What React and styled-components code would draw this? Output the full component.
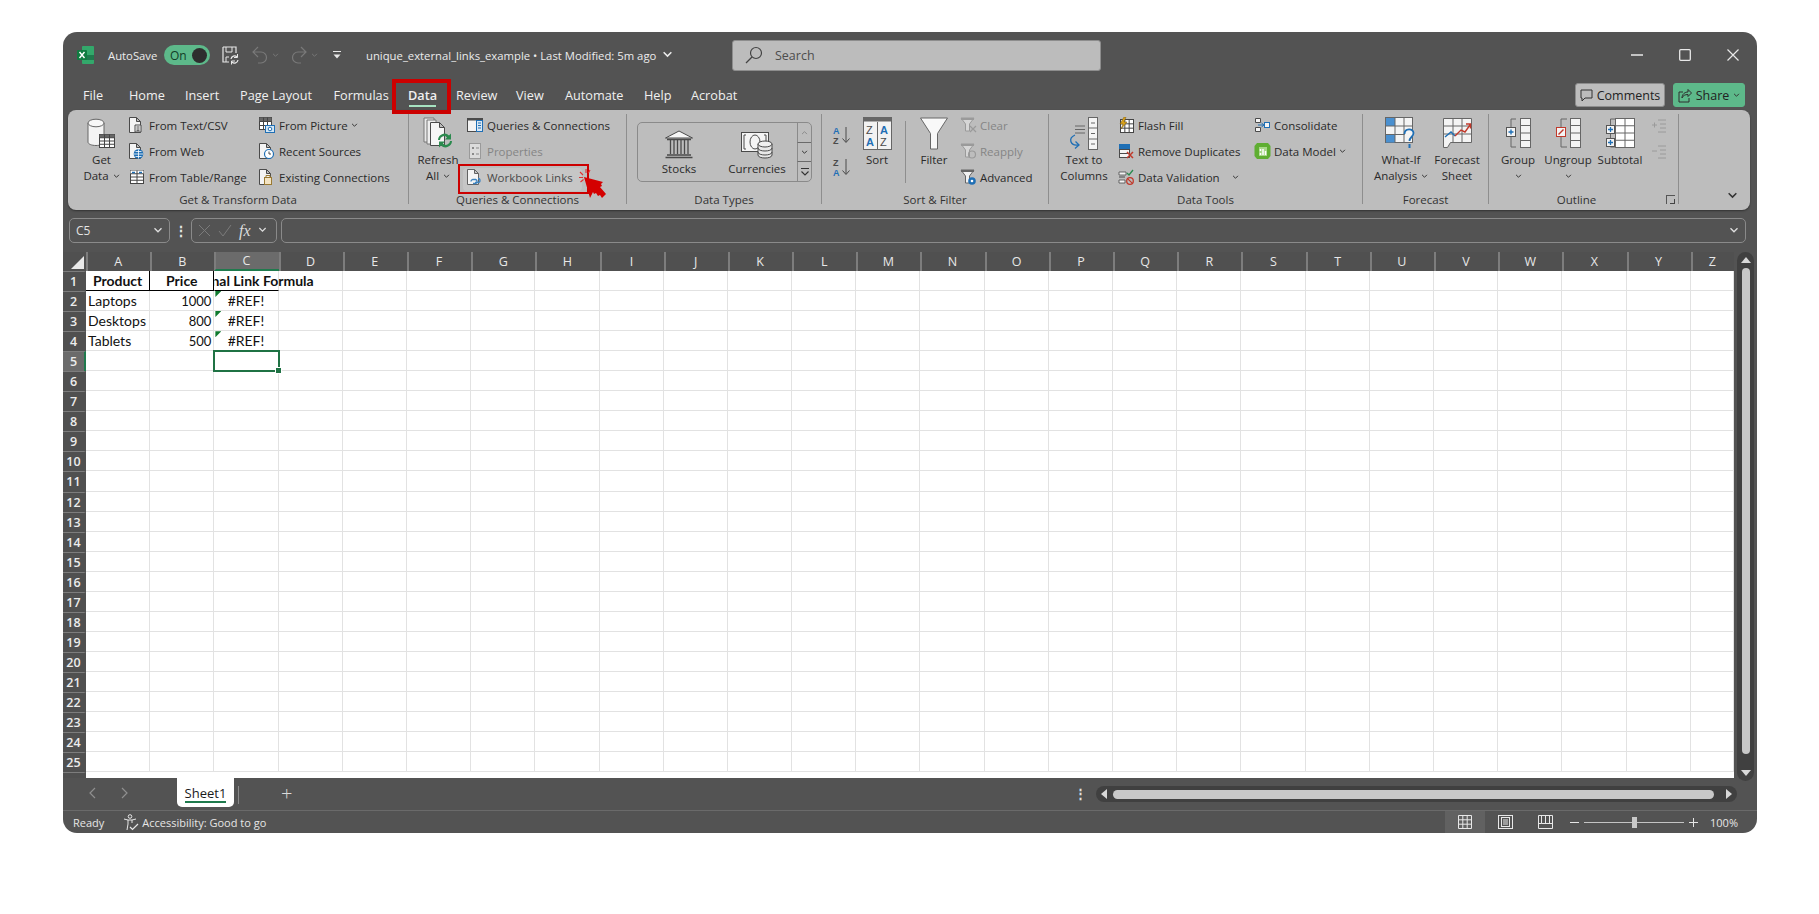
import React from "react";
import styled, { createGlobalStyle } from "styled-components";

const UI = `"Open Sans", "Noto Sans", sans-serif`;
const SHEET = `Lato, "Liberation Sans", sans-serif`;
const INK = "#4a4a4a";
const BLUE = "#1f6fb5";
const GREEN = "#2b8a4e";
const RED = "#c0392b";

const Global = createGlobalStyle`
  html, body { margin: 0; background: #fff; overflow: hidden; }
  body { font-family: ${UI}; }
  *, *::before, *::after { box-sizing: border-box; }
`;

//--- ICONS ---//

const Svg = ({ w = 16, h = 16, children }) => (
  <svg width={w} height={h} viewBox={`0 0 ${w} ${h}`} fill="none" style={{ display: "block", flex: "none" }}>
    {children}
  </svg>
);

const Doc = ({ x = 0.5, y = 0.5, w = 11, h = 15 }) => (
  <path d={`M${x} ${y}h${w - 4}l4 4v${h - 4}h-${w}z M${x + w - 4} ${y}v4h4`} fill="#f4f4f4" stroke={INK} />
);

const Chev = ({ color = "#333", size = 7, up }) => (
  <svg width={size} height={size * 0.7} viewBox="0 0 8 6" fill="none" style={{ flex: "none" }}>
    <path d={up ? "M1 5l3-3 3 3" : "M1 1l3 3 3-3"} stroke={color} strokeWidth="1.2" />
  </svg>
);

const TableLines = ({ x, y, w, h, cols = 3, rows = 3, band = "#555", stroke = "#444" }) => {
  const cw = w / cols;
  const rh = h / rows;
  return (
    <g>
      <rect x={x} y={y} width={w} height={h} fill="#fff" stroke={stroke} />
      {band && <rect x={x} y={y} width={w} height={rh} fill={band} />}
      {Array.from({ length: cols - 1 }, (_, i) => (
        <path key={i} d={`M${x + cw * (i + 1)} ${y}v${h}`} stroke={stroke} />
      ))}
      {Array.from({ length: rows - 1 }, (_, i) => (
        <path key={i} d={`M${x} ${y + rh * (i + 1)}h${w}`} stroke={stroke} />
      ))}
    </g>
  );
};

const IconGetData = () => (
  <Svg w={29} h={31}>
    <path d="M1 5v19c0 2 3.5 3.5 8 3.5s8-1.5 8-3.5V5" fill="#f4f4f4" stroke="#666" />
    <ellipse cx="9" cy="5" rx="8" ry="3.8" fill="#f8f8f8" stroke="#666" />
    <TableLines x={12.5} y={16.5} w={15} h={13} rows={4} cols={3} band="#666" />
  </Svg>
);
const IconTextCsv = () => (
  <Svg><Doc /><path d="M6 8h6v7H6z" fill="#f4f4f4" stroke={INK} /><path d="M7.5 10h3M7.5 12h3M7.5 13.7h3" stroke={INK} /></Svg>
);
const IconWeb = () => (
  <Svg><Doc /><circle cx="9.5" cy="11" r="4.8" fill={BLUE} /><path d="M5 11h9M9.5 6.5v9M6.500 8.500h6M6.500 13.500h6" stroke="#fff" strokeWidth=".8" /></Svg>
);
const IconTableRange = () => (
  <Svg>
    <TableLines x={1.5} y={1.5} w={13} h={13} cols={2} rows={4} band="#fff" />
    <path d="M3 3.5h3M10 3.5h3" stroke={BLUE} strokeWidth="1.6" />
  </Svg>
);
const IconPicture = () => (
  <Svg w={16} h={16}>
    <TableLines x={0.5} y={0.5} w={12} h={12} cols={3} rows={3} band="#666" />
    <rect x="6.5" y="8.5" width="9" height="7" fill="#d5e6f3" stroke={BLUE} />
    <circle cx="11" cy="12" r="1.800" fill="#fff" stroke={BLUE} />
  </Svg>
);
const IconRecent = () => (
  <Svg><Doc /><circle cx="10" cy="11" r="4.5" fill="#fff" stroke={BLUE} strokeWidth="1.2" /><path d="M10 8.500V11h2" stroke={INK} /></Svg>
);
const IconExisting = () => (
  <Svg>
    <Doc />
    <rect x="5.5" y="8.5" width="7" height="7" fill="#f3e4c4" stroke="#9a7a33" />
    <path d="M7 8.500V6.500h4v2" stroke="#9a7a33" />
  </Svg>
);
const IconRefresh = () => (
  <Svg w={31} h={33}>
    <path d="M1 1h10v24H1z" fill="#e8e8e8" stroke="#777" />
    <path d="M4 3h9v24H4z" fill="#eee" stroke="#777" />
    <path d="M7.5 5.5h9l5 5v18h-14z M16.5 5.5v5h5" fill="#f6f6f6" stroke={INK} />
    <path d="M15 23a6.5 6.5 0 0 1 11-4.5l2-2v6h-6l2-2a4 4 0 0 0-7 2.500z" fill={GREEN} />
    <path d="M29 24a6.500 6.500 0 0 1-11 4.500l-2 2v-6h6l-2 2a4 4 0 0 0 7-2.500z" fill={GREEN} />
  </Svg>
);
const IconQueries = () => (
  <Svg>
    <rect x=".5" y="1.500" width="15" height="13" fill="#f4f4f4" stroke={INK} />
    <rect x=".5" y="1.500" width="15" height="2" fill={INK} />
    <rect x="9.500" y="3.500" width="6" height="11" fill="#dbe8f4" stroke={BLUE} />
    <path d="M11 6h3M11 8.500h3M11 11h3" stroke={BLUE} />
  </Svg>
);
const IconProperties = () => (
  <Svg>
    <rect x="2.500" y=".5" width="11" height="15" fill="#dcdcdc" stroke="#9a9a9a" />
    <path d="M5 4h2v2H5zM5 10h2v2H5z" fill="#8a8a8a" /><path d="M9 5h3M9 11h3" stroke="#8a8a8a" />
  </Svg>
);
const IconWorkbookLinks = () => (
  <Svg>
    <Doc />
    <path d="M4 12.500a2 2 0 0 1 2-2h3M8 10.500a2 2 0 0 1 0 4H6M11 9.500a2 2 0 0 1 0 4H8" stroke={BLUE} strokeWidth="1.300" />
  </Svg>
);
const IconStocks = () => (
  <Svg w={30} h={29}>
    <path d="M15 1L1.500 8h27z" fill="#f6f6f6" stroke={INK} />
    <path d="M3 9.500h24M3 25h24M1.500 27.500h27" stroke={INK} strokeWidth="1.400" />
    <path d="M6.500 10v14M10 10v14M13.500 10v14M17 10v14M20.500 10v14M24 10v14" stroke={INK} strokeWidth="1.300" />
  </Svg>
);
const IconCurrencies = () => (
  <Svg w={32} h={30}>
    <rect x=".5" y="3.500" width="27" height="19" fill="#f4f4f4" stroke={INK} />
    <path d="M5 6H3v14h2M23 6h2v14h-2" stroke={INK} />
    <ellipse cx="14" cy="13" rx="5" ry="7" fill="#f4f4f4" stroke={INK} />
    <path d="M17 15v11c0 4 14 4 14 0V15" fill="#e8e8e8" stroke={INK} />
    <ellipse cx="24" cy="15" rx="7" ry="3" fill="#f0f0f0" stroke={INK} />
    <path d="M17 19c0 4 14 4 14 0M17 23c0 4 14 4 14 0" stroke={INK} />
  </Svg>
);
const SortAZ = ({ top, bottom, topColor, bottomColor }) => (
  <Svg w={20} h={21}>
    <text x="1" y="8.500" fontSize="9" fontWeight="700" fontFamily="Liberation Sans" fill={topColor}>{top}</text>
    <text x="1" y="18.500" fontSize="9" fontWeight="700" fontFamily="Liberation Sans" fill={bottomColor}>{bottom}</text>
    <path d="M14 2v15M10.500 13.500L14 17.500l3.500-4" stroke={INK} />
  </Svg>
);
const IconSort = () => (
  <Svg w={29} h={33}>
    <rect x=".5" y=".5" width="28" height="32" fill="#f2f2f2" stroke="#666" />
    <rect x=".5" y=".5" width="28" height="4" fill="#666" />
    <path d="M14.500 5v28" stroke="#666" />
    <text x="3" y="17" fontSize="11" fontFamily="Liberation Sans" fill={INK}>Z</text>
    <text x="3" y="29" fontSize="11" fontWeight="700" fontFamily="Liberation Sans" fill={BLUE}>A</text>
    <text x="17" y="17" fontSize="11" fontWeight="700" fontFamily="Liberation Sans" fill={BLUE}>A</text>
    <text x="17" y="29" fontSize="11" fontFamily="Liberation Sans" fill={INK}>Z</text>
  </Svg>
);
const IconFilter = () => (
  <Svg w={28} h={33}>
    <path d="M.5 1h27L17.500 16.500V32h-7V16.500z" fill="#f8f8f8" stroke="#666" />
  </Svg>
);
const SmallFunnel = ({ dim, children }) => (
  <Svg w={18} h={18}>
    <path d="M1 2h13L9.500 8v7h-4V8z" fill={dim ? "#d6d6d6" : "#f2f2f2"} stroke={dim ? "#9a9a9a" : "#666"} />
    <path d="M1 2h13v2H1z" fill={dim ? "#9a9a9a" : "#666"} />
    {children}
  </Svg>
);
const IconClear = () => (
  <SmallFunnel dim><path d="M10 10l6 6M16 10l-6 6" stroke="#9a9a9a" strokeWidth="1.200" /></SmallFunnel>
);
const IconReapply = () => (
  <SmallFunnel dim><circle cx="12" cy="12.500" r="3.500" stroke="#9a9a9a" strokeWidth="1.200" /></SmallFunnel>
);
const IconAdvanced = () => (
  <SmallFunnel><circle cx="12" cy="13" r="3.800" fill={BLUE} /><circle cx="12" cy="13" r="1.300" fill="#fff" /></SmallFunnel>
);
const IconTextColumns = () => (
  <Svg w={32} h={33}>
    <path d="M7 9h10M7 12.500h10M7 16h10" stroke="#666" />
    <rect x="20.500" y=".5" width="9" height="32" fill="#f4f4f4" stroke="#666" />
    <path d="M20.500 11h9M20.500 22h9M23 6h4M23 16.500h4M23 27h4" stroke="#666" />
    <path d="M7 18c-7 3-5 11 3 10" stroke={BLUE} strokeWidth="1.300" />
    <path d="M7.500 24.500L11 28l-4 3.500" stroke={BLUE} strokeWidth="1.300" />
  </Svg>
);
const IconFlash = () => (
  <Svg>
    <TableLines x={2.500} y={2.500} w={13} h={13} cols={3} rows={3} band="" />
    <path d="M6 0L2 7h3L3 12l6-7H6l2-5z" fill="#d9a21b" stroke="#7a5a10" strokeWidth=".5" />
  </Svg>
);
const IconDuplicates = () => (
  <Svg>
    <rect x="1" y="1" width="11" height="5" fill={BLUE} />
    <rect x="1.500" y="6.500" width="10" height="8" fill="#f4f4f4" stroke={INK} />
    <path d="M1.500 10.500h10" stroke={INK} />
    <path d="M9 9l6 6M15 9l-6 6" stroke={RED} strokeWidth="1.500" />
  </Svg>
);
const IconValidation = () => (
  <Svg>
    <path d="M1 3h7v3H1zM1 11h6v3H1z" fill="#f4f4f4" stroke={INK} strokeWidth=".8" />
    <path d="M9 4l2 2 4-5" stroke={GREEN} strokeWidth="1.300" />
    <path d="M1 8h6" stroke={INK} />
    <circle cx="12" cy="12" r="3.300" stroke={RED} strokeWidth="1.300" /><path d="M9.800 9.800l4.400 4.400" stroke={RED} strokeWidth="1.200" />
  </Svg>
);
const IconConsolidate = () => (
  <Svg>
    <path d="M1.500 1.500h5v4h-5zM1.500 10.500h5v4h-5z" fill="#f4f4f4" stroke={INK} />
    <path d="M4 8h5M7.500 6L10 8 7.500 10" stroke={BLUE} />
    <rect x="10.500" y="5.500" width="5" height="5" fill="#f4f4f4" stroke={BLUE} />
  </Svg>
);
const IconDataModel = () => (
  <Svg w={17} h={18}>
    <path d="M3 1h11l2.500 3v10L14 17H3L.5 14V4z" fill="#5fae32" />
    <path d="M5 5h8v9H5z" fill="#a9d88a" />
    <path d="M6.500 7v2M6.500 11v2M9 7v6M11.500 9v4" stroke="#fff" strokeWidth="1.500" />
  </Svg>
);
const IconWhatIf = () => (
  <Svg w={32} h={33}>
    <rect x=".5" y=".5" width="27" height="25" fill="#f4f4f4" stroke="#666" />
    <rect x="1" y="1" width="9" height="8" fill="#4a90d0" />
    <rect x="1" y="9" width="9" height="8" fill="#f4f4f4" />
    <rect x="1" y="17.500" width="9" height="8" fill="#4a90d0" />
    <path d="M10 1v25M19 1v25M1 9h27M1 17.500h27" stroke="#666" />
    <path d="M19.500 17c0-6 9-6 9-1 0 4-4 4-4 8" fill="#f4f4f4" stroke={BLUE} strokeWidth="1.800" />
    <path d="M24.500 27v4" stroke={BLUE} strokeWidth="2" />
  </Svg>
);
const IconForecast = () => (
  <Svg w={29} h={31}>
    <path d="M.5.5h28v24h-21l-3 5H.5z" fill="#f4f4f4" stroke="#666" />
    <path d="M.5 8h28M.5 16h28M10 .5v24M19 .5v24" stroke="#666" />
    <path d="M2 19l6-5 4 4" stroke={BLUE} strokeWidth="1.400" />
    <path d="M12 18l6-6 4 2 5-7M23 6h4.500v4.500" stroke={RED} strokeWidth="1.400" />
  </Svg>
);
const OutlineRows = ({ x, w = 10 }) => (
  <g>
    <rect x={x + 0.5} y=".5" width={w} height="29" fill="#f4f4f4" stroke="#666" />
    <path d={`M${x} 7.500h${w}M${x} 15h${w}M${x} 22.500h${w}`} stroke="#666" />
  </g>
);
const IconGroup = () => (
  <Svg w={25} h={30}>
    <OutlineRows x={14} />
    <path d="M10 1H5v28h5" stroke="#666" />
    <rect x=".5" y="9.500" width="9" height="9" fill="#f4f4f4" stroke="#555" />
    <path d="M5 11.500v5M2.500 14h5" stroke={BLUE} strokeWidth="1.400" />
  </Svg>
);
const IconUngroup = () => (
  <Svg w={25} h={30}>
    <OutlineRows x={14} />
    <path d="M11 1H5v28h6" stroke="#666" />
    <rect x=".5" y="9.500" width="9" height="9" fill="#f4f4f4" stroke={RED} />
    <path d="M2.500 16.500L7.500 11.500" stroke={RED} strokeWidth="1.400" />
  </Svg>
);
const IconSubtotal = () => (
  <Svg w={29} h={30}>
    <TableLines x={9.500} y={.5} w={19} h={29} cols={2} rows={4} band="" stroke="#666" />
    <path d="M9 1H4.500v28H9" stroke="#666" />
    <rect x=".5" y="7.500" width="8" height="8" fill="#f4f4f4" stroke="#555" />
    <rect x=".5" y="20.500" width="8" height="8" fill="#f4f4f4" stroke="#555" />
    <path d="M4.500 9v5M2 11.500h5M4.500 22v5M2 24.500h5" stroke={BLUE} strokeWidth="1.300" />
  </Svg>
);
const IconOutlineLevel = ({ sign }) => (
  <Svg w={16} h={15}>
    <path d="M7 2h8M9 6h6M9 10h6M7 14h8" stroke="#9a9a9a" />
    <path d={sign === "+" ? "M1 7h5M3.500 4.500v5" : "M1 7h5"} stroke="#9a9a9a" />
  </Svg>
);
const IconExcel = () => (
  <Svg w={17} h={18}>
    <rect x="5" y="0" width="12" height="18" rx="1" fill="#33a86b" />
    <rect x="5" y="9" width="12" height="5" fill="#1f7a4d" />
    <rect x="0" y="4" width="10" height="10" rx="1" fill="#107c41" />
    <path d="M2.500 6l5 6M7.500 6l-5 6" stroke="#fff" strokeWidth="1.400" />
  </Svg>
);
const IconSave = () => (
  <Svg w={17} h={19}>
    <path d="M1 1h13v6M1 1v15h6" stroke="#e8e8e8" strokeWidth="1.200" />
    <path d="M4 1v5h6V1M4 16v-5h3" stroke="#e8e8e8" />
    <path d="M9 13a3.500 3.500 0 0 1 6-2M16 14a3.500 3.500 0 0 1-6 2" stroke="#e8e8e8" strokeWidth="1.200" />
    <path d="M15.500 8v3.500H12M9.500 18.500V15H13" stroke="#e8e8e8" />
  </Svg>
);
const IconUndo = () => (
  <Svg w={16} h={18}>
    <path d="M6 1L1 6l5 5M1 6h8a5.500 5.500 0 0 1 0 11H6" stroke="#797979" strokeWidth="1.200" />
  </Svg>
);
const IconRedo = () => (
  <Svg w={16} h={18}>
    <path d="M10 1l5 5-5 5M15 6H7a5.500 5.500 0 0 0 0 11h3" stroke="#797979" strokeWidth="1.200" />
  </Svg>
);
const IconCustomize = () => (
  <Svg w={10} h={10}>
    <path d="M1 1.500h8" stroke="#e8e8e8" /><path d="M1.500 4.500h7L5 8.500z" fill="#e8e8e8" />
  </Svg>
);
const IconMoreDark = () => (
  <Svg w={10} h={10}>
    <path d="M1 1.500h8" stroke="#333" /><path d="M1.500 4.500L5 8l3.500-3.500" stroke="#333" strokeWidth="1.100" />
  </Svg>
);
const IconSearch = () => (
  <Svg w={18} h={18}>
    <circle cx="11" cy="7" r="5.500" stroke="#444" strokeWidth="1.200" />
    <path d="M7 11l-6 6" stroke="#444" strokeWidth="1.300" />
  </Svg>
);
const IconComment = () => (
  <Svg w={13} h={13}>
    <path d="M1 1h11v8H5l-3 3V9H1z" stroke="#333" />
  </Svg>
);
const IconShare = () => (
  <Svg w={14} h={15}>
    <path d="M5 4H1v10h10v-4" stroke="#2f2f2f" />
    <path d="M4 10c0-4 3-6 6-6V1.500L13.500 5 10 8.500V6.500c-3 0-5 1-6 3.500z" stroke="#2f2f2f" />
  </Svg>
);
const IconAccessibility = () => (
  <Svg w={16} h={17}>
    <circle cx="7" cy="2.500" r="1.800" stroke="#e6e6e6" />
    <path d="M1 5l4 1h4l4-1M5 6v4l-1 6M9 6v3" stroke="#e6e6e6" />
    <path d="M7 13l2.500 2.500L15 10" stroke="#e6e6e6" strokeWidth="1.200" />
  </Svg>
);
const IconNormalView = () => (
  <Svg w={14} h={14}>
    <path d="M.5.5h13v13H.5zM4.800.5v13M9.200.5v13M.5 4.800h13M.5 9.200h13" stroke="#e8e8e8" />
  </Svg>
);
const IconPageView = () => (
  <Svg w={15} h={14}>
    <rect x=".5" y=".5" width="14" height="13" stroke="#e8e8e8" />
    <rect x="3.500" y="2.500" width="8" height="9" stroke="#e8e8e8" />
    <path d="M5 5h5M5 7h5M5 9h5" stroke="#e8e8e8" />
  </Svg>
);
const IconBreakView = () => (
  <Svg w={15} h={14}>
    <path d="M.5.5h14v13H.5zM.5 8.500h3v-8M7.500 8.500v-8M11.500 8.500v-8M3.500 8.500h11" stroke="#e8e8e8" />
  </Svg>
);
const RedCursor = () => (
  <Svg w={25} h={26}>
    <path d="M1 1l6 21 3-6 1 2 2-1 2 3 2-1 2 3 4-4-6-7 2-1-1-2 2-2z" fill="#d40000" />
  </Svg>
);
const Sparks = () => (
  <Svg w={14} h={14}>
    <path d="M7 0v4M1 3l3 3M0 8.500h4M1.500 13l3-2.500M11 1l-1.500 3" stroke="#e03030" strokeWidth="1.100" />
  </Svg>
);

//--- LAYOUT ---//

const Win = styled.div`
  width: 1694px;
  height: 801px;
  margin: 32px 0 0 63px;
  background: #535353;
  border-radius: 14px;
  overflow: hidden;
  display: flex;
  flex-direction: column;
`;

const TitleBar = styled.div`
  height: 46px;
  flex: none;
  display: flex;
  align-items: center;
  color: #ececec;
  font-size: 11.3px;
  white-space: nowrap;
`;

const TitleItem = styled.div`
  display: flex;
  align-items: center;
  flex: none;
  width: ${({ $w }) => $w}px;
  margin-left: ${({ $ml }) => $ml || 0}px;
  gap: ${({ $gap }) => $gap || 0}px;
`;

const Toggle = styled.div`
  width: 46px;
  height: 20px;
  border-radius: 10px;
  background: #5db98a;
  display: flex;
  align-items: center;
  justify-content: space-between;
  padding: 0 3px 0 6px;
  color: #123d28;
  font-size: 12px;
  flex: none;
  &::after {
    content: "";
    width: 15px;
    height: 15px;
    border-radius: 50%;
    background: #2e2e2e;
  }
`;

const SearchBox = styled.div`
  width: 369px;
  height: 31px;
  margin-left: 46px;
  flex: none;
  background: #bcbcbc;
  border: 1px solid #8d8d8d;
  border-radius: 3px;
  display: flex;
  align-items: center;
  gap: 12px;
  padding-left: 12px;
  color: #4d4d4d;
  font-size: 12.5px;
`;

const WinButtons = styled.div`
  margin-left: auto;
  width: 126px;
  display: flex;
  justify-content: space-between;
  align-items: center;
  padding-right: 18px;
  flex: none;
`;

const TabsRow = styled.div`
  height: 32px;
  flex: none;
  display: flex;
  align-items: center;
  padding: 2px 0 0 20px;
  position: relative;
  color: #f0f0f0;
  font-size: 12.7px;
`;

const Tab = styled.div`
  width: ${({ $w }) => $w}px;
  flex: none;
  position: relative;
  ${({ $active }) =>
    $active &&
    `
    font-weight: 600;
    &::before {
      content: "";
      position: absolute;
      left: -16px;
      top: -7px;
      width: 59px;
      height: 35px;
      border: 4px solid #cc0000;
      pointer-events: none;
    }
    &::after {
      content: "";
      position: absolute;
      left: 1px;
      top: 19px;
      width: 27px;
      height: 2px;
      background: #a6e3c1;
    }
  `}
`;

const TabActions = styled.div`
  margin-left: auto;
  margin-right: 12px;
  display: flex;
  gap: 8px;
`;

const PillButton = styled.div`
  height: 24px;
  display: flex;
  align-items: center;
  justify-content: center;
  gap: 4px;
  width: ${({ $w }) => $w}px;
  background: ${({ $bg }) => $bg};
  border: 1px solid ${({ $border }) => $border};
  border-radius: 3px;
  color: #222;
  font-size: 12.5px;
`;

const Ribbon = styled.div`
  height: 100px;
  flex: none;
  margin: 0 7px 0 5px;
  background: #bdbdbd;
  border-radius: 8px;
  box-shadow: 0 1px 2px rgba(0, 0, 0, 0.4);
  display: flex;
  color: #2a2a2a;
  font-size: 11.5px;
`;

const Group = styled.div`
  width: ${({ $w }) => $w}px;
  flex: none;
  height: 90px;
  margin-top: 4px;
  border-right: 1px solid #8e8e8e;
  display: flex;
  flex-direction: column;
`;

const GroupBody = styled.div`
  height: 78px;
  flex: none;
  display: flex;
  align-items: flex-start;
  padding-left: ${({ $pl }) => $pl || 0}px;
`;

const GroupLabel = styled.div`
  height: 12px;
  line-height: 16px;
  text-align: center;
  color: #333;
  padding-right: ${({ $pr }) => $pr || 0}px;
  position: relative;
`;

const Launcher = styled.div`
  position: absolute;
  right: 3px;
  top: 3px;
  width: 9px;
  height: 9px;
  border: 1px solid #555;
  border-right: 0;
  border-bottom: 0;
  &::after {
    content: "";
    position: absolute;
    right: 0;
    bottom: 0;
    width: 5px;
    height: 5px;
    border-right: 1px solid #444;
    border-bottom: 1px solid #444;
  }
`;

const LargeButton = styled.div`
  width: ${({ $w }) => $w}px;
  margin-left: ${({ $ml }) => $ml || 0}px;
  flex: none;
  display: flex;
  flex-direction: column;
  align-items: center;
  line-height: 16px;
  white-space: nowrap;
`;

const IconSlot = styled.div`
  height: 38px;
  display: flex;
  align-items: center;
  justify-content: center;
`;

const LabelLine = styled.div`
  display: flex;
  align-items: center;
  justify-content: center;
  gap: 4px;
  height: 16px;
`;

const SmallColumn = styled.div`
  width: ${({ $w }) => $w || 120}px;
  margin: -2px 0 0 ${({ $ml }) => $ml || 0}px;
  flex: none;
  display: flex;
  flex-direction: column;
  position: relative;
`;

const SmallButton = styled.div`
  height: 26px;
  display: flex;
  align-items: center;
  white-space: nowrap;
  color: ${({ $dim }) => ($dim ? "#858585" : "inherit")};
`;

const SmallIcon = styled.div`
  width: 18px;
  flex: none;
  display: flex;
  justify-content: flex-start;
  margin-left: -2px;
  margin-right: 2px;
`;

const Callout = styled.div`
  position: absolute;
  left: -11px;
  top: 52px;
  width: 131px;
  height: 30px;
  border: 2.5px solid #cc0000;
  pointer-events: none;
  &::before {
    content: "";
    position: absolute;
    left: 3px;
    top: 2px;
    right: 5px;
    bottom: 1px;
    border-radius: 4px;
    background: rgba(255, 255, 255, 0.14);
  }
`;

const CalloutSpark = styled.div`
  position: absolute;
  left: 110px;
  top: 57px;
`;

const CalloutCursor = styled.div`
  position: absolute;
  left: 114px;
  top: 64px;
`;

const Gallery = styled.div`
  width: 175px;
  height: 60px;
  margin: 8px 0 0 10px;
  border: 1px solid #8a8a8a;
  border-radius: 5px;
  display: flex;
`;

const GalleryItem = styled.div`
  width: ${({ $w }) => $w}px;
  flex: none;
  display: flex;
  flex-direction: column;
  align-items: center;
  padding-top: 7px;
  line-height: 16px;
`;

const GallerySlot = styled.div`
  height: 28px;
  margin-bottom: 3px;
  display: flex;
  align-items: center;
`;

const GalleryScroll = styled.div`
  width: 14px;
  margin-left: auto;
  display: flex;
  flex-direction: column;
`;

const ScrollStep = styled.div`
  flex: 1;
  display: flex;
  align-items: center;
  justify-content: center;
  border-left: 1px solid #8a8a8a;
  border-top: ${({ $line }) => ($line ? "1px solid #6a6a6a" : "none")};
`;

const SortColumn = styled.div`
  width: 25px;
  flex: none;
  display: flex;
  flex-direction: column;
  gap: 11px;
  padding-top: 11px;
`;

const VDivider = styled.div`
  width: 1px;
  height: 62px;
  flex: none;
  margin: 7px 0 0 8px;
  background: #8e8e8e;
`;

const RibbonEnd = styled.div`
  flex: 1;
  display: flex;
  align-items: flex-end;
  justify-content: flex-end;
  padding: 0 12px 10px 0;
`;

//--- FORMULA BAR ---//

const FormulaBar = styled.div`
  height: 25px;
  flex: none;
  margin-top: 8px;
  padding-left: 6px;
  display: flex;
  align-items: center;
  color: #e4e4e4;
`;

const BarBox = styled.div`
  width: ${({ $w }) => ($w ? `${$w}px` : "auto")};
  flex: ${({ $w }) => ($w ? "none" : "1")};
  height: 25px;
  border: 1px solid #8a8a8a;
  border-radius: 5px;
  display: flex;
  align-items: center;
  justify-content: ${({ $between }) => ($between ? "space-between" : "flex-start")};
  padding: 0 6px;
  font-size: 12px;
  gap: ${({ $gap }) => $gap || 0}px;
  margin-right: ${({ $mr }) => $mr || 0}px;
`;

const BarDots = styled.div`
  width: 21px;
  flex: none;
  text-align: center;
  font-size: 14px;
  font-weight: 700;
`;

const Fx = styled.span`
  font-family: "Liberation Serif", serif;
  font-style: italic;
  font-size: 16px;
  color: #dcdcdc;
`;

//--- SHEET ---//

const SheetArea = styled.div`
  height: 526px;
  flex: none;
  margin-top: 9px;
  display: flex;
`;

const GridWrap = styled.div`
  width: 1671px;
  flex: none;
  overflow: hidden;
  display: grid;
  grid-template-columns: 23px repeat(25, 64.19px) 1fr;
  grid-template-rows: 19px repeat(25, 20.05px) 1fr;
  background: #fff;
  font-family: ${SHEET};
  font-size: 14px;
  color: #111;
`;

const Corner = styled.div`
  background: #505050;
  position: relative;
  &::after {
    content: "";
    position: absolute;
    right: 2px;
    bottom: 2px;
    width: 13px;
    height: 13px;
    background: #e8e8e8;
    clip-path: polygon(100% 0, 100% 100%, 0 100%);
  }
`;

const ColHead = styled.div`
  background: ${({ $active }) => ($active ? "#6b6b6b" : "#505050")};
  border-left: 2px solid #7d7d7d;
  border-bottom: ${({ $active }) => ($active ? "2px solid #1f7a4d" : "none")};
  padding-right: 2px;
  color: #e8e8e8;
  font-family: ${UI};
  font-size: 12.5px;
  display: flex;
  align-items: center;
  justify-content: center;
`;

const RowHead = styled.div`
  background: ${({ $active }) => ($active ? "#6b6b6b" : "#505050")};
  border-top: 1px solid #7d7d7d;
  border-right: 2px solid ${({ $active }) => ($active ? "#1f7a4d" : "#505050")};
  color: #ececec;
  font-family: ${UI};
  font-size: 12.5px;
  font-weight: 600;
  display: flex;
  align-items: center;
  justify-content: center;
`;

const Cell = styled.div`
  position: relative;
  border-right: 1px solid ${({ $ruledR }) => ($ruledR ? "#000" : "#e2e2e2")};
  border-bottom: 1px solid ${({ $ruledB }) => ($ruledB ? "#000" : "#e2e2e2")};
  display: flex;
  align-items: center;
  padding: 0 2px;
  white-space: nowrap;
  font-size: ${({ $num }) => ($num ? "13px" : "inherit")};
  font-weight: ${({ $bold }) => ($bold ? 700 : 400)};
  justify-content: ${({ $align }) => $align || "flex-start"};
  ${({ $spill }) => $spill && "clip-path: inset(0 -200px 0 0); z-index: 1;"}
  ${({ $flag }) =>
    $flag &&
    `
    &::before {
      content: "";
      position: absolute;
      left: 1px;
      top: 0;
      width: 6px;
      height: 6px;
      background: #0e7a2e;
      clip-path: polygon(0 0, 100% 0, 0 100%);
    }
  `}
  ${({ $selected }) =>
    $selected &&
    `
    outline: 2px solid #1f7244;
    outline-offset: -1px;
    z-index: 2;
    &::after {
      content: "";
      position: absolute;
      right: -4px;
      bottom: -4px;
      width: 7px;
      height: 7px;
      background: #1f7244;
      border: 1px solid #fff;
    }
  `}
`;

const VScroll = styled.div`
  width: 23px;
  flex: none;
  padding: 0 3px;
  margin-bottom: -3px;
`;

const VTrack = styled.div`
  height: 100%;
  background: #404040;
  border-radius: 9px;
  display: flex;
  flex-direction: column;
  align-items: center;
  padding: 5px 0;
  gap: 5px;
`;

const VThumb = styled.div`
  flex: 1;
  width: 8px;
  border-radius: 4px;
  background: #c8c8c8;
  margin-bottom: 11px;
`;

const Tri = styled.div`
  width: 0;
  height: 0;
  flex: none;
  ${({ $dir }) => {
    if ($dir === "up") return "border: 5px solid transparent; border-bottom: 6px solid #d8d8d8; border-top: 0;";
    if ($dir === "down") return "border: 5px solid transparent; border-top: 6px solid #d8d8d8; border-bottom: 0;";
    if ($dir === "left") return "border: 5px solid transparent; border-right: 6px solid #d8d8d8; border-left: 0;";
    return "border: 5px solid transparent; border-left: 6px solid #d8d8d8; border-right: 0;";
  }}
`;

//--- BOTTOM ---//

const SheetBar = styled.div`
  height: 33px;
  flex: none;
  display: flex;
  align-items: flex-start;
  padding-left: 12px;
  border-bottom: 1px solid #6a6a6a;
  color: #8f8f8f;
`;

const NavArrow = styled.div`
  width: 33px;
  height: 30px;
  flex: none;
  display: flex;
  align-items: center;
  justify-content: center;
`;

const SheetTab = styled.div`
  width: 57px;
  height: 29px;
  margin-left: 36px;
  flex: none;
  background: #fff;
  border-radius: 0 0 5px 5px;
  color: #1a1a1a;
  font-size: 13px;
  font-weight: 500;
  display: flex;
  align-items: center;
  justify-content: center;
  position: relative;
  &::after {
    content: "";
    position: absolute;
    left: 8px;
    right: 8px;
    bottom: 4px;
    height: 2px;
    background: #1f7a4d;
  }
`;

const TabSep = styled.div`
  width: 1px;
  height: 18px;
  margin: 8px 0 0 4px;
  background: #8a8a8a;
`;

const AddSheet = styled.div`
  margin-left: 42px;
  height: 30px;
  display: flex;
  align-items: center;
  color: #dadada;
  font-size: 20px;
  font-weight: 300;
`;

const MoreDots = styled.div`
  margin-left: auto;
  width: 16px;
  height: 30px;
  display: flex;
  align-items: center;
  justify-content: center;
  color: #e0e0e0;
  font-size: 13px;
  font-weight: 700;
`;

const HTrack = styled.div`
  width: 641px;
  height: 16px;
  margin: 8px 20px 0 8px;
  flex: none;
  background: #404040;
  border-radius: 8px;
  display: flex;
  align-items: center;
  padding: 0 5px;
  gap: 4px;
`;

const HThumb = styled.div`
  flex: 1;
  height: 9px;
  margin: 0 8px 0 2px;
  border-radius: 5px;
  background: #c8c8c8;
`;

const StatusBar = styled.div`
  flex: 1;
  display: flex;
  align-items: center;
  padding-left: 10px;
  color: #e6e6e6;
  font-size: 11px;
`;

const StatusA11y = styled.div`
  margin-left: 19px;
  display: flex;
  align-items: center;
  gap: 3px;
`;

const ViewButton = styled.div`
  width: 40px;
  height: 100%;
  flex: none;
  display: flex;
  align-items: center;
  justify-content: center;
  background: ${({ $active }) => ($active ? "#616161" : "transparent")};
`;

const ViewGroup = styled.div`
  margin-left: auto;
  height: 100%;
  display: flex;
`;

const ZoomSign = styled.div`
  width: 9px;
  height: 9px;
  flex: none;
  margin: 0 ${({ $mr }) => $mr}px 0 ${({ $ml }) => $ml}px;
  position: relative;
  &::before {
    content: "";
    position: absolute;
    left: 0;
    right: 0;
    top: 4px;
    height: 1px;
    background: #e6e6e6;
  }
  ${({ $plus }) =>
    $plus &&
    `
    &::after {
      content: "";
      position: absolute;
      top: 0;
      bottom: 0;
      left: 4px;
      width: 1px;
      background: #e6e6e6;
    }
  `}
`;

const ZoomTrack = styled.div`
  width: 100px;
  height: 1px;
  flex: none;
  background: #c4c4c4;
  position: relative;
  &::after {
    content: "";
    position: absolute;
    left: 48px;
    top: -5px;
    width: 5px;
    height: 11px;
    background: #c8c8c8;
  }
`;

const ZoomValue = styled.div`
  width: 40px;
  margin: 0 13px 0 6px;
  flex: none;
  text-align: center;
`;

//--- DATA ---//

const TABS = [
  ["File", 46], ["Home", 56], ["Insert", 55], ["Page Layout", 93.5], ["Formulas", 74.5],
  ["Data", 48, true], ["Review", 60], ["View", 49], ["Automate", 79], ["Help", 47], ["Acrobat", 60],
];

const LETTERS = "ABCDEFGHIJKLMNOPQRSTUVWXYZ".split("");

const CELLS = {
  A1: { text: "Product", $bold: true, $align: "center", $ruledR: true, $ruledB: true },
  B1: { text: "Price", $bold: true, $align: "center", $ruledR: true, $ruledB: true },
  C1: { text: "External Link Formula", $bold: true, $align: "center", $spill: true, $ruledB: true },
  A2: { text: "Laptops" },
  B2: { text: "1000", $align: "flex-end", $num: true },
  C2: { text: "#REF!", $align: "center", $flag: true },
  A3: { text: "Desktops" },
  B3: { text: "800", $align: "flex-end", $num: true },
  C3: { text: "#REF!", $align: "center", $flag: true },
  A4: { text: "Tablets" },
  B4: { text: "500", $align: "flex-end", $num: true },
  C4: { text: "#REF!", $align: "center", $flag: true },
  C5: { $selected: true },
};

const Small = ({ icon, children, dim, after }) => (
  <SmallButton $dim={dim}>
    <SmallIcon>{icon}</SmallIcon>
    {children}
    {after}
  </SmallButton>
);

const Large = ({ icon, lines, w, ml, chevOn }) => (
  <LargeButton $w={w} $ml={ml}>
    <IconSlot>{icon}</IconSlot>
    {lines.map((line, i) => (
      <LabelLine key={i}>
        {line}
        {chevOn === i && <Chev />}
      </LabelLine>
    ))}
  </LargeButton>
);

//--- COMPONENT ---//

const App = () => {
  return (
    <>
      <Global />
      <Win>
        <TitleBar>
          <TitleItem $w={14} $ml={14}><IconExcel /></TitleItem>
          <TitleItem $w={56} $ml={17}>AutoSave</TitleItem>
          <Toggle>On</Toggle>
          <TitleItem $w={17} $ml={12}><IconSave /></TitleItem>
          <TitleItem $w={42} $ml={13} $gap={4}><IconUndo /><Chev color="#797979" /></TitleItem>
          <TitleItem $w={42} $ml={-3} $gap={4}><IconRedo /><Chev color="#797979" /></TitleItem>
          <TitleItem $w={10} $ml={-1}><IconCustomize /></TitleItem>
          <TitleItem $w={320} $ml={24} $gap={6}>
            unique_external_links_example&nbsp;•&nbsp;Last Modified: 5m ago
            <Chev color="#ececec" size={11} />
          </TitleItem>
          <SearchBox>
            <IconSearch />
            Search
          </SearchBox>
          <WinButtons>
            <Svg w={12} h={12}><path d="M0 6h12" stroke="#e8e8e8" strokeWidth="1.300" /></Svg>
            <Svg w={12} h={12}><rect x=".7" y=".7" width="10.600" height="10.600" rx="1" stroke="#e8e8e8" strokeWidth="1.300" /></Svg>
            <Svg w={12} h={12}><path d="M.5.5l11 11M11.500.5l-11 11" stroke="#e8e8e8" strokeWidth="1.200" /></Svg>
          </WinButtons>
        </TitleBar>

        <TabsRow>
          {TABS.map(([name, w, active]) => (
            <Tab key={name} $w={w} $active={active}>{name}</Tab>
          ))}
          <TabActions>
            <PillButton $w={90} $bg="#bdbdbd" $border="#8d8d8d"><IconComment />Comments</PillButton>
            <PillButton $w={72} $bg="#5db98a" $border="#5db98a"><IconShare />Share<Chev /></PillButton>
          </TabActions>
        </TabsRow>

        <Ribbon>
          <Group $w={341}>
            <GroupBody $pl={4}>
              <Large w={59} icon={<IconGetData />} lines={["Get", "Data"]} chevOn={1} />
              <SmallColumn $w={130}>
                <Small icon={<IconTextCsv />}>From Text/CSV</Small>
                <Small icon={<IconWeb />}>From Web</Small>
                <Small icon={<IconTableRange />}>From Table/Range</Small>
              </SmallColumn>
              <SmallColumn $w={140}>
                <Small icon={<IconPicture />} after={<>&nbsp;<Chev /></>}>From Picture</Small>
                <Small icon={<IconRecent />}>Recent Sources</Small>
                <Small icon={<IconExisting />}>Existing Connections</Small>
              </SmallColumn>
            </GroupBody>
            <GroupLabel>Get &amp; Transform Data</GroupLabel>
          </Group>

          <Group $w={218}>
            <GroupBody $pl={4}>
              <Large w={50} icon={<IconRefresh />} lines={["Refresh", "All"]} chevOn={1} />
              <SmallColumn $w={150} $ml={6}>
                <Small icon={<IconQueries />}>Queries &amp; Connections</Small>
                <Small icon={<IconProperties />} dim>Properties</Small>
                <Small icon={<IconWorkbookLinks />}>Workbook Links</Small>
                <Callout />
                <CalloutSpark><Sparks /></CalloutSpark>
                <CalloutCursor><RedCursor /></CalloutCursor>
              </SmallColumn>
            </GroupBody>
            <GroupLabel>Queries &amp; Connections</GroupLabel>
          </Group>

          <Group $w={195}>
            <GroupBody>
              <Gallery>
                <GalleryItem $w={82}><GallerySlot><IconStocks /></GallerySlot>Stocks</GalleryItem>
                <GalleryItem $w={74}><GallerySlot><IconCurrencies /></GallerySlot>Currencies</GalleryItem>
                <GalleryScroll>
                  <ScrollStep><Chev color="#8a8a8a" up /></ScrollStep>
                  <ScrollStep $line><Chev /></ScrollStep>
                  <ScrollStep $line><IconMoreDark /></ScrollStep>
                </GalleryScroll>
              </Gallery>
            </GroupBody>
            <GroupLabel>Data Types</GroupLabel>
          </Group>

          <Group $w={227}>
            <GroupBody $pl={10}>
              <SortColumn>
                <SortAZ top="A" bottom="Z" topColor={BLUE} bottomColor={INK} />
                <SortAZ top="Z" bottom="A" topColor={INK} bottomColor={BLUE} />
              </SortColumn>
              <Large w={40} icon={<IconSort />} lines={["Sort"]} />
              <VDivider />
              <Large w={44} ml={6} icon={<IconFilter />} lines={["Filter"]} />
              <SmallColumn $w={80} $ml={6}>
                <Small icon={<IconClear />} dim>Clear</Small>
                <Small icon={<IconReapply />} dim>Reapply</Small>
                <Small icon={<IconAdvanced />}>Advanced</Small>
              </SmallColumn>
            </GroupBody>
            <GroupLabel>Sort &amp; Filter</GroupLabel>
          </Group>

          <Group $w={314}>
            <GroupBody $pl={6}>
              <Large w={58} icon={<IconTextColumns />} lines={["Text to", "Columns"]} />
              <SmallColumn $w={136} $ml={7}>
                <Small icon={<IconFlash />}>Flash Fill</Small>
                <Small icon={<IconDuplicates />}>Remove Duplicates</Small>
                <Small icon={<IconValidation />} after={<>&nbsp;&nbsp;&nbsp;&nbsp;<Chev /></>}>Data Validation</Small>
              </SmallColumn>
              <SmallColumn $w={100}>
                <Small icon={<IconConsolidate />}>Consolidate</Small>
                <Small icon={<IconDataModel />} after={<>&nbsp;<Chev /></>}>Data Model</Small>
              </SmallColumn>
            </GroupBody>
            <GroupLabel>Data Tools</GroupLabel>
          </Group>

          <Group $w={126}>
            <GroupBody $pl={8}>
              <Large w={60} icon={<IconWhatIf />} lines={["What-If", "Analysis"]} chevOn={1} />
              <Large w={52} icon={<IconForecast />} lines={["Forecast", "Sheet"]} />
            </GroupBody>
            <GroupLabel>Forecast</GroupLabel>
          </Group>

          <Group $w={190}>
            <GroupBody $pl={4}>
              <Large w={50} icon={<IconGroup />} lines={["Group", <Chev key="c" />]} />
              <Large w={50} icon={<IconUngroup />} lines={["Ungroup", <Chev key="c" />]} />
              <Large w={54} icon={<IconSubtotal />} lines={["Subtotal"]} />
              <SmallColumn $w={20} $ml={6}>
                <Small icon={<IconOutlineLevel sign="+" />} />
                <Small icon={<IconOutlineLevel sign="-" />} />
              </SmallColumn>
            </GroupBody>
            <GroupLabel $pr={14}>Outline<Launcher /></GroupLabel>
          </Group>

          <RibbonEnd><Chev size={11} /></RibbonEnd>
        </Ribbon>

        <FormulaBar>
          <BarBox $w={101} $between>C5<Chev color="#dcdcdc" size={10} /></BarBox>
          <BarDots>⋮</BarDots>
          <BarBox $w={86} $gap={7} $mr={4}>
            <Svg w={13} h={13}><path d="M1 1l11 11M12 1L1 12" stroke="#7b7b7b" /></Svg>
            <Svg w={14} h={13}><path d="M1 7l4 5 8-11" stroke="#7b7b7b" /></Svg>
            <Fx>fx</Fx>
            <Chev color="#dcdcdc" size={9} />
          </BarBox>
          <BarBox $between $mr={11}><span /><Chev color="#dcdcdc" size={10} /></BarBox>
        </FormulaBar>

        <SheetArea>
          <GridWrap>
            <Corner />
            {LETTERS.map((l) => (
              <ColHead key={l} $active={l === "C"}>{l}</ColHead>
            ))}
            {Array.from({ length: 25 }, (_, i) => i + 1).map((row) => (
              <React.Fragment key={row}>
                <RowHead $active={row === 5}>{row}</RowHead>
                {LETTERS.map((l) => {
                  const { text, ...rest } = CELLS[`${l}${row}`] || {};
                  return <Cell key={l} {...rest}>{text}</Cell>;
                })}
              </React.Fragment>
            ))}
            <RowHead />
          </GridWrap>
          <VScroll>
            <VTrack>
              <Tri $dir="up" />
              <VThumb />
              <Tri $dir="down" />
            </VTrack>
          </VScroll>
        </SheetArea>

        <SheetBar>
          <NavArrow>
            <Svg w={8} h={12}><path d="M7 1L2 6l5 5" stroke="#8f8f8f" strokeWidth="1.200" /></Svg>
          </NavArrow>
          <NavArrow>
            <Svg w={8} h={12}><path d="M1 1l5 5-5 5" stroke="#8f8f8f" strokeWidth="1.200" /></Svg>
          </NavArrow>
          <SheetTab>Sheet1</SheetTab>
          <TabSep />
          <AddSheet>+</AddSheet>
          <MoreDots>⋮</MoreDots>
          <HTrack>
            <Tri $dir="left" />
            <HThumb />
            <Tri $dir="right" />
          </HTrack>
        </SheetBar>

        <StatusBar>
          Ready
          <StatusA11y><IconAccessibility />Accessibility: Good to go</StatusA11y>
          <ViewGroup>
            <ViewButton $active><IconNormalView /></ViewButton>
            <ViewButton><IconPageView /></ViewButton>
            <ViewButton><IconBreakView /></ViewButton>
          </ViewGroup>
          <ZoomSign $ml={5} $mr={5} />
          <ZoomTrack />
          <ZoomSign $ml={5} $mr={0} $plus />
          <ZoomValue>100%</ZoomValue>
        </StatusBar>
      </Win>
    </>
  );
};

export default App;
